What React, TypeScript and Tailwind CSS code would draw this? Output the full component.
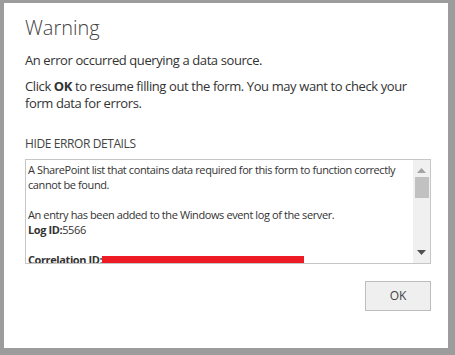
export default function App() {
  return (
    <div className="w-[455px] h-[355px] bg-[#9c9c9c] pt-[3px] pl-[4px] pr-[7px] pb-[7px] flex">
      <div
        className="flex-1 bg-white flex flex-col pl-[21px] pr-[17px] text-[#333] tracking-[-0.025em]"
        style={{ fontFamily: '"Open Sans", "Noto Sans", sans-serif' }}
      >
        <h1 className="mt-[11px] text-[20px] leading-[28px] font-light text-[#444] tracking-normal">Warning</h1>
        <p className="mt-[10px] text-[13px] leading-[17px]">An error occurred querying a data source.</p>
        <p className="mt-[9px] text-[13px] leading-[17px]">
          Click <b className="font-bold">OK</b> to resume filling out the form. You may want to check your form data for errors.
        </p>
        <div className="mt-[24px] text-[12px] leading-[16px] text-[#444]">HIDE ERROR DETAILS</div>
        <div className="mt-[7px] h-[105px] border border-[#c6c6c6] flex overflow-hidden">
          <div className="flex-1 pl-[2px] pt-[2px] text-[11px] leading-[15px] text-[#333] overflow-hidden">
            <p>A SharePoint list that contains data required for this form to function correctly cannot be found.</p>
            <p className="mt-[15px]">An entry has been added to the Windows event log of the server.</p>
            <p>
              <b className="font-bold">Log ID:</b>5566
            </p>
            <p className="mt-[15px] flex items-start">
              <b className="font-bold">Correlation ID:</b>
              <span className="w-[202px] h-[14px] mt-[4px] bg-[#ed1c24]" />
            </p>
          </div>
          <div className="w-[17px] bg-[#f0f0f0] flex flex-col items-center">
            <svg width="9" height="5" viewBox="0 0 9 5" className="mt-[8px]">
              <path d="M4.5 0 L9 5 L0 5 Z" fill="#a3a3a3" />
            </svg>
            <div className="mt-[4px] w-[14px] h-[21px] bg-[#c1c1c1]" />
            <div className="flex-1" />
            <svg width="9" height="5" viewBox="0 0 9 5" className="mb-[8px]">
              <path d="M0 0 L9 0 L4.5 5 Z" fill="#505050" />
            </svg>
          </div>
        </div>
        <div className="mt-[17px] flex justify-end">
          <button className="w-[66px] h-[30px] bg-[#efefef] border border-[#bdbdbd] text-[12px] text-[#444] tracking-normal">OK</button>
        </div>
      </div>
    </div>
  );
}
